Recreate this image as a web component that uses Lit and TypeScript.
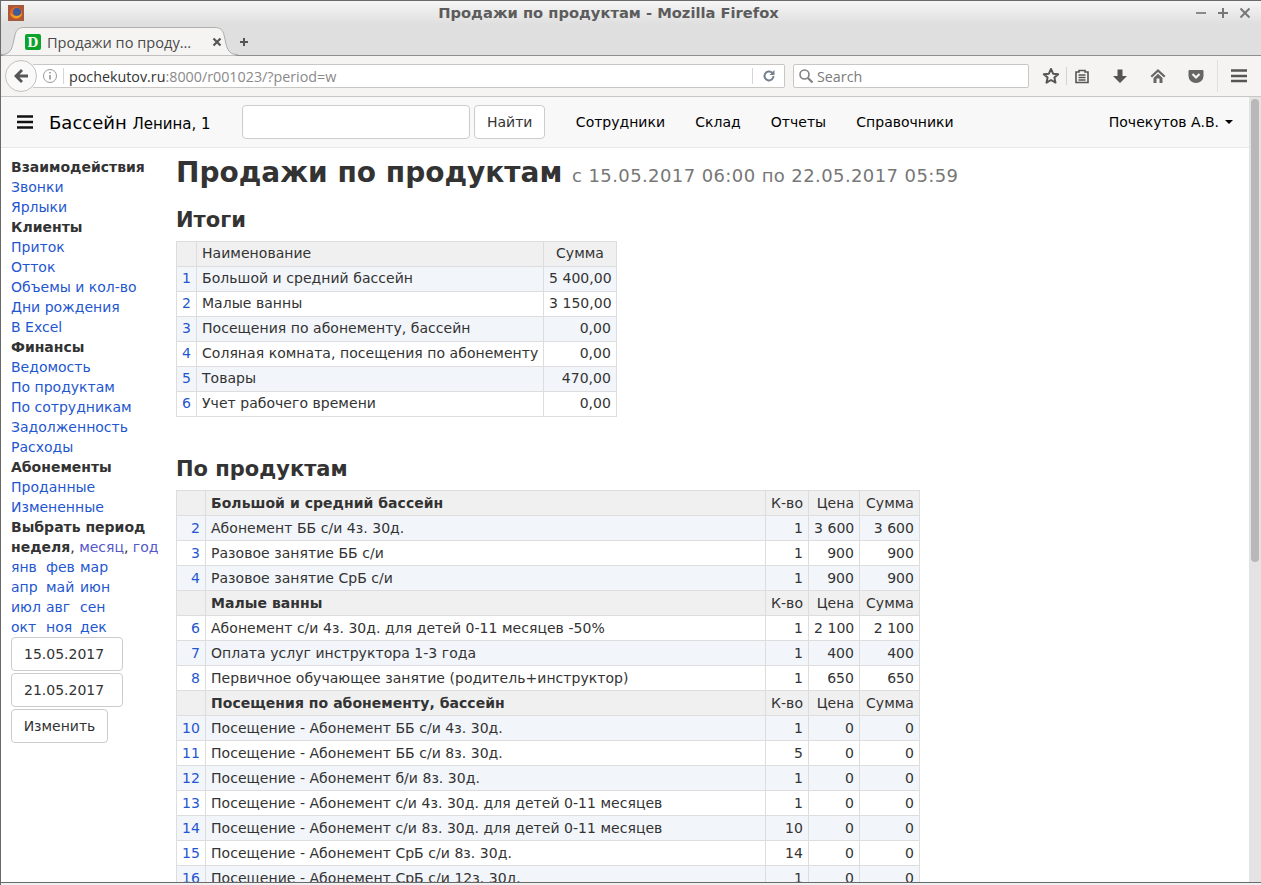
import { LitElement, html, css, svg } from 'lit';
import { customElement } from 'lit/decorators.js';

type Row = [string, string, string?, string?, string?];

const totals: Row[] = [
  ['1', 'Большой и средний бассейн', '5 400,00'],
  ['2', 'Малые ванны', '3 150,00'],
  ['3', 'Посещения по абонементу, бассейн', '0,00'],
  ['4', 'Соляная комната, посещения по абонементу', '0,00'],
  ['5', 'Товары', '470,00'],
  ['6', 'Учет рабочего времени', '0,00'],
];

const products: (Row | string)[] = [
  'Большой и средний бассейн',
  ['2', 'Абонемент ББ с/и 4з. 30д.', '1', '3 600', '3 600'],
  ['3', 'Разовое занятие ББ с/и', '1', '900', '900'],
  ['4', 'Разовое занятие СрБ с/и', '1', '900', '900'],
  'Малые ванны',
  ['6', 'Абонемент с/и 4з. 30д. для детей 0-11 месяцев -50%', '1', '2 100', '2 100'],
  ['7', 'Оплата услуг инструктора 1-3 года', '1', '400', '400'],
  ['8', 'Первичное обучающее занятие (родитель+инструктор)', '1', '650', '650'],
  'Посещения по абонементу, бассейн',
  ['10', 'Посещение - Абонемент ББ с/и 4з. 30д.', '1', '0', '0'],
  ['11', 'Посещение - Абонемент ББ с/и 8з. 30д.', '5', '0', '0'],
  ['12', 'Посещение - Абонемент б/и 8з. 30д.', '1', '0', '0'],
  ['13', 'Посещение - Абонемент с/и 4з. 30д. для детей 0-11 месяцев', '1', '0', '0'],
  ['14', 'Посещение - Абонемент с/и 8з. 30д. для детей 0-11 месяцев', '10', '0', '0'],
  ['15', 'Посещение - Абонемент СрБ с/и 8з. 30д.', '14', '0', '0'],
  ['16', 'Посещение - Абонемент СрБ с/и 12з. 30д.', '1', '0', '0'],
];

const sideGroups: [string, string[]][] = [
  ['Взаимодействия', ['Звонки', 'Ярлыки']],
  ['Клиенты', ['Приток', 'Отток', 'Объемы и кол-во', 'Дни рождения', 'В Excel']],
  ['Финансы', ['Ведомость', 'По продуктам', 'По сотрудникам', 'Задолженность', 'Расходы']],
  ['Абонементы', ['Проданные', 'Измененные']],
];

const months = ['янв', 'фев', 'мар', 'апр', 'май', 'июн', 'июл', 'авг', 'сен', 'окт', 'ноя', 'дек'];

const icon = (w: number, body: unknown) =>
  html`<svg width=${w} height=${w} viewBox="0 0 ${w} ${w}">${body}</svg>`;

@customElement('app-root')
export class AppRoot extends LitElement {
  static styles = css`
    :host {
      display: flex;
      flex-direction: column;
      height: 885px;
      overflow: hidden;
      font-family: 'DejaVu Sans', sans-serif;
      font-size: 14px;
      color: #333;
      background: #fff;
      border-left: 1px solid #6a6a6a;
      border-top: 1px solid #6a6a6a;
      box-sizing: border-box;
      position: relative;
    }
    svg { display: block; }
    a { color: #1f57d0; text-decoration: none; }

    .titlebar {
      height: 27px;
      flex: none;
      display: flex;
      align-items: center;
      box-sizing: border-box;
      padding: 0 8px 4px 7px;
      background: linear-gradient(#f6f6f6, #dfdfdf 85%);
    }
    .titlebar .title {
      flex: 1;
      text-align: center;
      font: bold 14.700px 'DejaVu Sans', sans-serif;
      color: #5c5c5c;
    }
    .winbtns { display: flex; gap: 6px; }

    .tabbar {
      height: 28px;
      flex: none;
      display: flex;
      align-items: center;
      background: #dfdfdf;
      border-bottom: 1px solid #8d8d8d;
      box-sizing: border-box;
      position: relative;
    }
    .tabshape { position: absolute; left: 0; top: -1px; }
    .tab {
      width: 197px;
      margin-left: 24px;
      box-sizing: border-box;
      display: flex;
      align-items: center;
      gap: 6px;
      position: relative;
      font: 14.6px 'Open Sans', sans-serif;
      color: #4a4a4a;
    }
    .tab .fav {
      width: 16px;
      height: 16px;
      flex: none;
      border-radius: 2px;
      background: #0ca32c;
      color: #fff;
      font: bold 15px/16px 'Liberation Serif', serif;
      text-align: center;
    }
    .tab .name { flex: 1; white-space: nowrap; }
    .plus { margin-left: 17px; position: relative; }

    .toolbar {
      height: 41px;
      flex: none;
      display: flex;
      align-items: center;
      background: #f5f4f3;
      border-bottom: 1px solid #c9c7c4;
      box-sizing: border-box;
      padding: 0 0 0 4px;
    }
    .back {
      width: 32px;
      height: 32px;
      flex: none;
      border-radius: 50%;
      background: #f9f9f9;
      border: 1px solid #c4c2bf;
      box-sizing: border-box;
      display: flex;
      align-items: center;
      justify-content: center;
      z-index: 1;
    }
    .url {
      width: 752px;
      height: 24px;
      margin-left: -4px;
      box-sizing: border-box;
      display: flex;
      align-items: center;
      background: #fff;
      border: 1px solid #c9c7c4;
      border-left: none;
      border-radius: 0 2px 2px 0;
      font: 14.3px 'Open Sans', sans-serif;
      color: #8a8a8a;
      padding: 0 7px 0 9px;
    }
    .url .host { color: #333; }
    .url .sep { width: 1px; height: 16px; background: #d5d5d5; margin: 0 5px; }
    .url .sep.end { margin-right: 8px; }
    .url .addr { flex: 1; }
    .search {
      width: 236px;
      height: 24px;
      margin-left: 8px;
      box-sizing: border-box;
      display: flex;
      align-items: center;
      gap: 3px;
      padding-left: 4px;
      background: #fff;
      border: 1px solid #c9c7c4;
      border-radius: 2px;
      font: 14.3px 'Open Sans', sans-serif;
      color: #7b7b7b;
    }
    .tools { display: flex; align-items: center; margin-left: 13px; }
    .tools .vsep { width: 1px; height: 18px; background: #d5d3d0; margin: 0 7px 0 6px; }
    .tools .gap { margin-left: 22px; }
    .tools .vsep2 { width: 1px; height: 32px; background: #e2e0dd; margin: 0 13px; }

    .viewport { flex: 1; min-height: 0; display: flex; overflow: hidden; }
    .page { flex: 1; min-width: 0; display: flex; flex-direction: column; }
    .scrollbar {
      width: 12px;
      flex: none;
      background: #e3e3e3;
      padding: 2px 2px 0 2px;
      box-sizing: border-box;
    }
    .scrollbar div { height: 463px; background: #b8b8b8; border-radius: 4px; }

    .navbar {
      height: 51px;
      flex: none;
      box-sizing: border-box;
      display: flex;
      align-items: center;
      background: #f8f8f8;
      border-bottom: 1px solid #e7e7e7;
      color: #000;
    }
    .burger { margin-left: 16px; }
    .brand { margin-left: 16px; font-size: 18px; white-space: nowrap; width: 193px; }
    .brand small { font-size: 15px; }
    .navbar input {
      width: 228px;
      height: 34px;
      box-sizing: border-box;
      background: #fff;
      border: 1px solid #ccc;
      border-radius: 4px;
    }
    .btn {
      display: inline-block;
      box-sizing: border-box;
      height: 34px;
      padding: 0 12px;
      line-height: 32px;
      background: #fff;
      border: 1px solid #ccc;
      border-radius: 4px;
      font-size: 14px;
      color: #333;
    }
    .navbar .btn { margin-left: 4px; }
    .menu { display: flex; gap: 30.2px; margin-left: 30.4px; flex: 1; }
    .user { display: flex; align-items: center; gap: 6px; margin-right: 16px; }
    .caret { width: 0; height: 0; border: 4px solid transparent; border-top-color: #000; border-bottom: 0; }

    .body { display: flex; flex: 1; min-height: 0; }
    .side { width: 175px; flex: none; padding: 9px 0 0 10px; box-sizing: border-box; line-height: 20px; }
    .side b, .side a { display: block; white-space: nowrap; }
    .side b { color: #333; }
    .side .inline { white-space: nowrap; }
    .side .inline b, .side .inline a { display: inline; }
    .side .inline a.visited { color: #5558c8; }
    .months { display: grid; grid-template-columns: 35px 34px auto; justify-content: start; }
    .side .field {
      display: block;
      width: 112px;
      height: 34px;
      line-height: 32px;
      padding: 0 12px;
      margin-bottom: 2px;
    }
    .side .submit { width: 97px; padding: 0; text-align: center; }

    .main { flex: 1; min-width: 0; }
    h1 { margin: 7px 0 0; font-size: 28px; line-height: 36px; font-weight: bold; color: #333; white-space: nowrap; }
    h1 small { font-size: 18px; font-weight: normal; color: #777; letter-spacing: 0.4px; }
    h3 { margin: 0; font-size: 21px; line-height: 26px; font-weight: bold; color: #333; }
    .h-tot { margin-top: 13px; margin-bottom: 8px; }
    .h-prod { margin-top: 39px; margin-bottom: 8px; }

    table { border-collapse: collapse; table-layout: fixed; letter-spacing: 0.04px; }
    td {
      border: 1px solid #ddd;
      padding: 0 5px;
      height: 25px;
      box-sizing: border-box;
      white-space: nowrap;
      text-align: left;
      line-height: 20px;
    }
    td.r { text-align: right; }
    td.c { text-align: center; }
    tr.head td { background: #f0f0f0; }
    tr.alt td { background: #f2f5fa; }
    tr.plain td { background: #fff; }
    td.group { font-weight: bold; }
    .t1 { width: 440px; }
    .t1 td { padding-bottom: 2px; }
    .t1 .n { width: 20px; }
    .t1 .name { width: 347px; }
    .t1 .s { width: 73px; }
    .t2 { width: 743px; }
    .t2 .n { width: 29px; }
    .t2 .name { width: 560px; }
    .t2 .q { width: 43px; }
    .t2 .p { width: 51px; }
    .t2 .s { width: 60px; }

    .strip { position: absolute; left: 0; right: 0; bottom: 0; height: 3px; background: #f0f0f0; border-top: 1px solid #6a6a6a; box-sizing: border-box; }
  `;

  private chrome() {
    return html`
      <div class="titlebar">
        ${icon(16, svg`<rect width="16" height="16" fill="#a9583a"/><circle cx="8" cy="8" r="6" fill="#e8661f"/><circle cx="9" cy="7" r="4" fill="#3d5c9c"/><path d="M2 8c1 4 5 6 8 5s4-3 4-5c-2 3-6 4-9 2z" fill="#f0a020"/>`)}
        <div class="title">Продажи по продуктам - Mozilla Firefox</div>
        <div class="winbtns">
          ${icon(16, svg`<path d="M3 8h10" stroke="#8a8a8a" stroke-width="2"/>`)}
          ${icon(16, svg`<path d="M3 8h10M8 3v10" stroke="#777" stroke-width="2"/>`)}
          ${icon(16, svg`<path d="M3.500 3.500l9 9M12.500 3.500l-9 9" stroke="#777" stroke-width="2"/>`)}
        </div>
      </div>
      <div class="tabbar">
        <svg class="tabshape" width="250" height="29" viewBox="0 0 250 29">
          <path d="M0 28.500C7 28 10 25 12 17L14 8C15 3 18 .5 23 .5H214C219 .5 222 3 223 8L225 17C227 25 230 28 237 28.500Z" fill="#f5f4f3"/>
          <path d="M0 27.500C7 27.500 10 25 12 17L14 8C15 3 18 .5 23 .5H214C219 .5 222 3 223 8L225 17C227 25 230 27.500 237 27.500" fill="none" stroke="#aeaeae"/>
        </svg>
        <div class="tab">
          <span class="fav">D</span>
          <span class="name">Продажи по проду…</span>
          ${icon(10, svg`<path d="M1.500 1.500l7 7M8.500 1.500l-7 7" stroke="#555" stroke-width="2.200"/>`)}
        </div>
        <div class="plus">${icon(10, svg`<path d="M1 5h8M5 1v8" stroke="#555" stroke-width="2"/>`)}</div>
      </div>
      <div class="toolbar">
        <div class="back">
          ${icon(18, svg`<path d="M2 9L9 2l2 2-3.500 3.500H16v3H7.500L11 14l-2 2z" fill="#555"/>`)}
        </div>
        <div class="url">
          ${icon(16, svg`<circle cx="8" cy="8" r="6.500" fill="none" stroke="#9a9a9a"/><path d="M8 7v4.500M8 4v1.500" stroke="#8a8a8a" stroke-width="1.500"/>`)}
          <span class="sep"></span>
          <span class="addr"><span class="host">pochekutov.ru</span>:8000/r001023/?period=w</span>
          <span class="sep end"></span>
          ${icon(16, svg`<path d="M12.500 8a4.500 4.500 0 1 1-1.300-3.200" fill="none" stroke="#74808c" stroke-width="2"/><path d="M13.500 2v5H8.500z" fill="#74808c"/>`)}
        </div>
        <div class="search">
          ${icon(16, svg`<circle cx="6.500" cy="6.500" r="4.500" fill="none" stroke="#808080" stroke-width="1.600"/><path d="M10 10l4.500 4.500" stroke="#808080" stroke-width="2.200"/>`)}
          Search
        </div>
        <div class="tools">
          ${icon(18, svg`<path d="M9 2l2.100 4.700 5.100.5-3.800 3.400 1.100 5L9 13l-4.500 2.600 1.100-5L1.800 7.200l5.100-.5z" fill="none" stroke="#555" stroke-width="2" stroke-linejoin="round"/>`)}
          <span class="vsep"></span>
          ${icon(16, svg`<path d="M2 4h3V2.500h6V4h3v10.500H2z" fill="none" stroke="#555" stroke-width="1.600"/><path d="M4.500 7h7M4.500 9.500h7M4.500 12h7" stroke="#555" stroke-width="1.400"/>`)}
          <span class="gap">${icon(16, svg`<path d="M5.500 1.500h5V8H15L8 15 1 8h4.500z" fill="#555"/>`)}</span>
          <span class="gap">${icon(16, svg`<path d="M8 1L.5 8 2 9.500l6-5.500 6 5.500L15.500 8z" fill="#666"/><path d="M3.500 10L8 5.800 12.500 10v5h-3v-4.500h-3V15h-3z" fill="#666"/>`)}</span>
          <span class="gap">${icon(16, svg`<path d="M1.500 2h13a1 1 0 0 1 1 1v5a7.500 7 0 0 1-15 0V3a1 1 0 0 1 1-1z" fill="#666"/><path d="M4.500 6L8 9.500 11.500 6" fill="none" stroke="#f5f4f3" stroke-width="2.200"/>`)}</span>
          <span class="vsep2"></span>
          ${icon(16, svg`<path d="M0 2.500h16M0 8h16M0 13h16" stroke="#555" stroke-width="2.600"/>`)}
        </div>
      </div>
    `;
  }

  private navbar() {
    return html`
      <div class="navbar">
        <div class="burger">${icon(16, svg`<path d="M0 2.500h16M0 8h16M0 13.500h16" stroke="#111" stroke-width="2.600"/>`)}</div>
        <div class="brand">Бассейн <small>Ленина, 1</small></div>
        <input />
        <span class="btn">Найти</span>
        <div class="menu">
          <span>Сотрудники</span><span>Склад</span><span>Отчеты</span><span>Справочники</span>
        </div>
        <div class="user">Почекутов А.В. <span class="caret"></span></div>
      </div>
    `;
  }

  private sidebar() {
    return html`
      <div class="side">
        ${sideGroups.map(
          ([title, links]) => html`<b>${title}</b>${links.map((l) => html`<a href="#">${l}</a>`)}`
        )}
        <b>Выбрать период</b>
        <div class="inline"><b>неделя</b>, <a class="visited" href="#">месяц</a>, <a class="visited" href="#">год</a></div>
        <div class="months">${months.map((m) => html`<a href="#">${m}</a>`)}</div>
        <span class="btn field">15.05.2017</span>
        <span class="btn field">21.05.2017</span>
        <span class="btn submit">Изменить</span>
      </div>
    `;
  }

  private totalsTable() {
    return html`
      <table class="t1">
        <tr class="head"><td class="n"></td><td class="name">Наименование</td><td class="s c">Сумма</td></tr>
        ${totals.map(
          (r, i) => html`<tr class=${i % 2 ? 'plain' : 'alt'}>
            <td class="r"><a href="#">${r[0]}</a></td><td>${r[1]}</td><td class="r">${r[2]}</td>
          </tr>`
        )}
      </table>
    `;
  }

  private productsTable() {
    // полосы идут через все строки данных, заголовки групп счетчик не сбрасывают
    let odd = true;
    return html`
      <table class="t2">
        ${products.map((r, i) => {
          if (typeof r === 'string') {
            return html`<tr class="head">
              <td class=${i === 0 ? 'n' : ''}></td><td class="group ${i === 0 ? 'name' : ''}">${r}</td>
              <td class="q r">К-во</td><td class="p r">Цена</td><td class="s r">Сумма</td>
            </tr>`;
          }
          const cls = odd ? 'alt' : 'plain';
          odd = !odd;
          return html`<tr class=${cls}>
            <td class="r"><a href="#">${r[0]}</a></td><td>${r[1]}</td>
            <td class="r">${r[2]}</td><td class="r">${r[3]}</td><td class="r">${r[4]}</td>
          </tr>`;
        })}
      </table>
    `;
  }

  render() {
    return html`
      ${this.chrome()}
      <div class="viewport">
        <div class="page">
          ${this.navbar()}
          <div class="body">
            ${this.sidebar()}
            <div class="main">
              <h1>Продажи по продуктам <small>с 15.05.2017 06:00 по 22.05.2017 05:59</small></h1>
              <h3 class="h-tot">Итоги</h3>
              ${this.totalsTable()}
              <h3 class="h-prod">По продуктам</h3>
              ${this.productsTable()}
            </div>
          </div>
        </div>
        <div class="scrollbar"><div></div></div>
      </div>
      <div class="strip"></div>
    `;
  }
}
